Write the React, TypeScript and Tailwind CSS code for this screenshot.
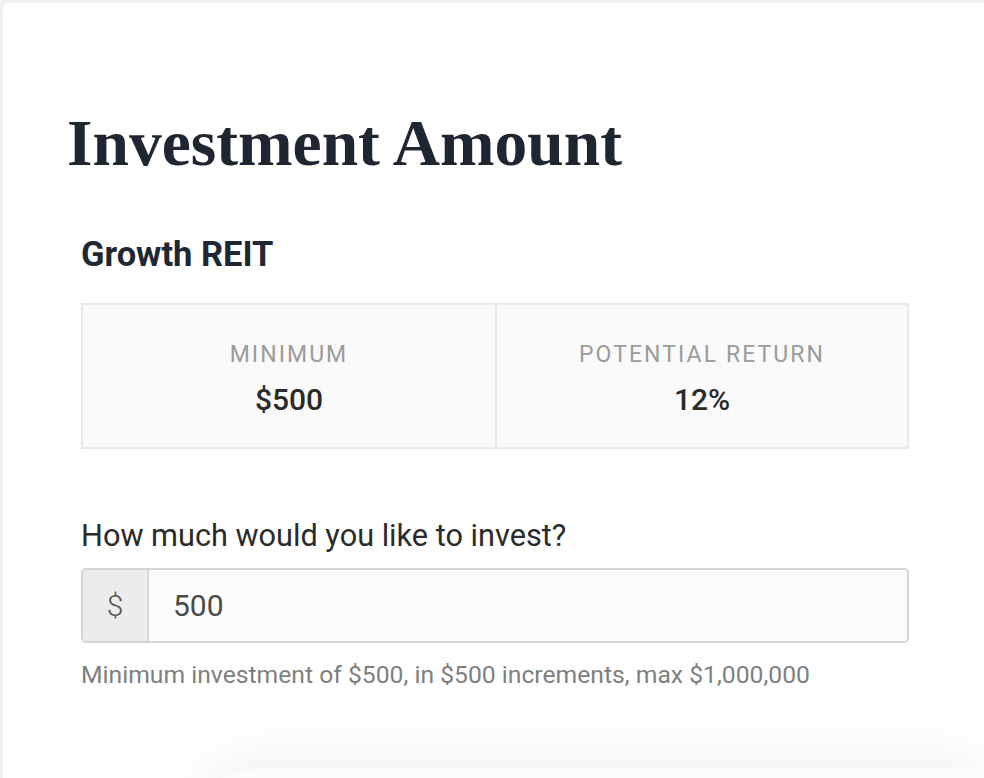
export default function App() {
  return (
    <div className="h-[778px] w-full overflow-hidden bg-[#f1f1f1] pl-[3px] pt-[3px]">
      <div className="relative h-full w-full overflow-hidden rounded-tl-lg bg-white pt-[108px] font-['Roboto',sans-serif]">
        {/* Title */}
        <h1 className="pl-[64px] font-['Liberation_Serif',serif] text-[65.5px] font-bold leading-none text-[#1e2632]">
          Investment Amount
        </h1>

        <div className="pl-[78px] pr-[75px]">
          <h2 className="mt-[60px] text-[34.5px] font-bold leading-none text-[#1f2733]">Growth REIT</h2>

          {/* Stats */}
          <div className="mt-[32px] grid grid-cols-2 border-2 border-[#e9e9e9] bg-[#fafafa]">
            <div className="flex flex-col items-center pb-[32px] pt-[38px]">
              <span className="text-[23px] leading-none tracking-[0.09em] text-[#9b9b9b]">MINIMUM</span>
              <span className="mt-[19px] text-[30px] font-medium leading-none text-[#2a2a2a]">$500</span>
            </div>
            <div className="flex flex-col items-center border-l-2 border-[#e9e9e9] pb-[32px] pt-[38px]">
              <span className="text-[23px] leading-none tracking-[0.09em] text-[#9b9b9b]">POTENTIAL RETURN</span>
              <span className="mt-[19px] text-[30px] font-medium leading-none text-[#2a2a2a]">12%</span>
            </div>
          </div>

          {/* Amount input */}
          <label className="mt-[72px] block text-[30.7px] leading-none text-[#2b2b2b]">
            How much would you like to invest?
          </label>
          <div className="mt-[16px] flex h-[75px] overflow-hidden rounded-[5px] border-2 border-[#d4d4d4]">
            <div className="flex w-[66px] items-center justify-center border-r-2 border-[#d8d8d8] bg-[#ececec] text-[30px] font-light text-[#555]">
              $
            </div>
            <input
              defaultValue="500"
              className="flex-1 bg-[#fcfcfc] pl-[24px] text-[30px] text-[#4a4a4a] outline-none"
            />
          </div>
          <p className="mt-[20px] text-[24.7px] leading-none text-[#7f7f7f]">
            Minimum investment of $500, in $500 increments, max $1,000,000
          </p>
        </div>

        {/* Footer panel sitting just below the fold; only its shadow shows */}
        <div className="ml-[190px] mt-[82px] h-[80px] rounded-tl-[60px] bg-[#fcfcfc] shadow-[0_-16px_60px_rgba(0,0,0,0.05)]" />
      </div>
    </div>
  );
}
